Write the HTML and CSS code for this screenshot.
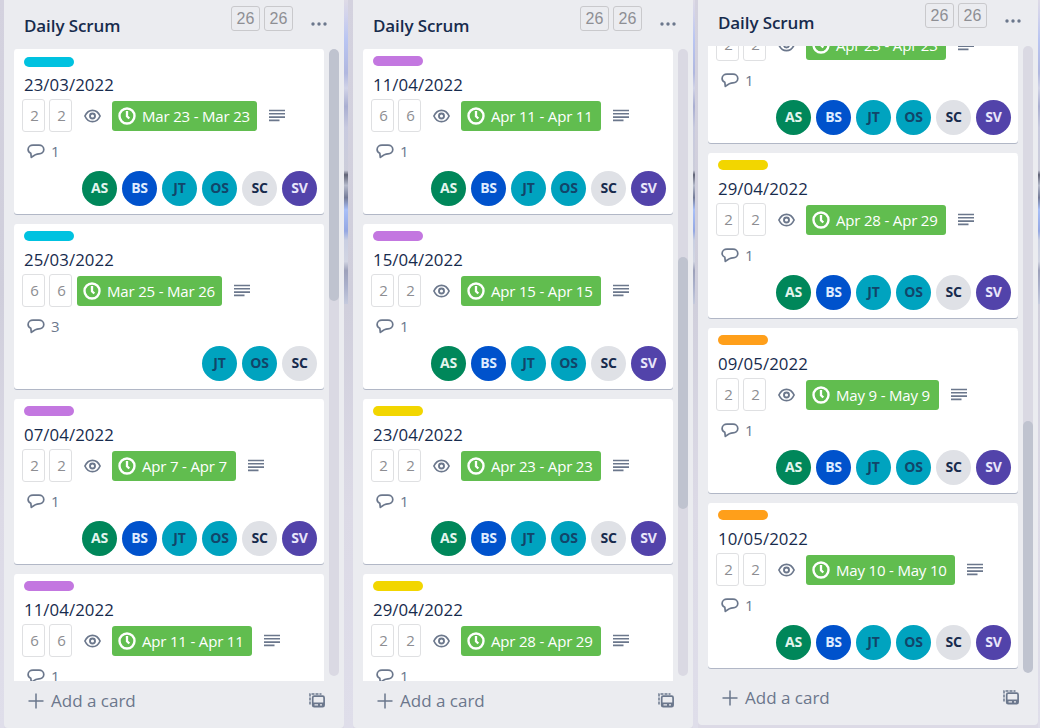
FILE: index.html
```
<!DOCTYPE html>
<html lang="en">
<head>
<meta charset="utf-8">
<title>Daily Scrum</title>
<link rel="stylesheet" href="styles.css">
</head>
<body>
<svg class="defs" aria-hidden="true">
  <symbol id="eye" viewBox="0 0 17 14"><path d="M.9 7C2.600 3.300 5.300 1.300 8.500 1.300S14.400 3.300 16.100 7C14.400 10.700 11.700 12.700 8.500 12.700S2.600 10.700.9 7Z" fill="none" stroke="currentColor" stroke-width="1.700"/><circle cx="8.500" cy="7" r="2.500" fill="none" stroke="currentColor" stroke-width="1.900"/></symbol>
  <symbol id="clock" viewBox="0 0 18 18"><circle cx="9" cy="9" r="7.500" fill="none" stroke="currentColor" stroke-width="2.400"/><path d="M9 4V9.200L11.300 11.500" fill="none" stroke="currentColor" stroke-width="2.300"/></symbol>
  <symbol id="lines" viewBox="0 0 16 13"><path d="M0 1.500H16M0 4.800H16M0 8.100H16M0 11.400H10.500" stroke="currentColor" stroke-width="1.600"/></symbol>
  <symbol id="talk" viewBox="0 0 18 15"><path d="M6 1.200H12A4.800 4.300 0 0 1 12 9.800Q8.500 9.800 4.300 13.400L3.800 9.200Q1.100 8 1.100 5.500A4.900 4.300 0 0 1 6 1.200Z" fill="none" stroke="currentColor" stroke-width="1.700" stroke-linejoin="round"/></symbol>
  <symbol id="plus" viewBox="0 0 16 16"><path d="M8 .5V15.500M.5 8H15.500" stroke="currentColor" stroke-width="1.500"/></symbol>
  <symbol id="template" viewBox="0 0 16 15"><path d="M1 11.500V1H12.500" fill="none" stroke="currentColor" stroke-width="1.500" stroke-dasharray="3 1"/><rect x="3.700" y="3.200" width="11.400" height="10.500" rx="1.500" fill="none" stroke="currentColor" stroke-width="1.700"/><path d="M4 9.500H15V13.500H4Z" fill="currentColor"/><path d="M5.500 11.800H9M11 11.800H13" stroke="#ebecf0" stroke-width="1.200"/></symbol>
  <symbol id="dots" viewBox="0 0 16 4"><g fill="currentColor"><circle cx="2" cy="2" r="1.700"/><circle cx="8" cy="2" r="1.700"/><circle cx="14" cy="2" r="1.700"/></g></symbol>
</svg>
<main class="board">
  <div class="gutter gutter-first"></div>

  <section class="list">
    <header class="list-header"><h2>Daily Scrum</h2><span class="count">26</span><span class="count">26</span><svg class="dots"><use href="#dots"/></svg></header>
    <div class="list-body">
      <div class="cards">
        <article class="card">
          <div class="label cyan lower"></div><h3>23/03/2022</h3>
          <div class="badges"><span class="points">2</span><span class="points second">2</span><svg class="eye"><use href="#eye"/></svg><span class="due mar"><svg class="clock"><use href="#clock"/></svg><span>Mar 23 - Mar 23</span></span><svg class="lines"><use href="#lines"/></svg></div>
          <div class="comments"><svg class="talk"><use href="#talk"/></svg><span>1</span></div>
          <div class="members"><span class="as">AS</span><span class="bs">BS</span><span class="jt">JT</span><span class="os">OS</span><span class="sc">SC</span><span class="sv">SV</span></div>
        </article>
        <article class="card">
          <div class="label cyan"></div><h3>25/03/2022</h3>
          <div class="badges"><span class="points">6</span><span class="points second">6</span><span class="due mar"><svg class="clock"><use href="#clock"/></svg><span>Mar 25 - Mar 26</span></span><svg class="lines"><use href="#lines"/></svg></div>
          <div class="comments"><svg class="talk"><use href="#talk"/></svg><span>3</span></div>
          <div class="members"><span class="jt">JT</span><span class="os">OS</span><span class="sc">SC</span></div>
        </article>
        <article class="card">
          <div class="label purple"></div><h3>07/04/2022</h3>
          <div class="badges"><span class="points">2</span><span class="points second">2</span><svg class="eye"><use href="#eye"/></svg><span class="due apr-short"><svg class="clock"><use href="#clock"/></svg><span>Apr 7 - Apr 7</span></span><svg class="lines"><use href="#lines"/></svg></div>
          <div class="comments"><svg class="talk"><use href="#talk"/></svg><span>1</span></div>
          <div class="members"><span class="as">AS</span><span class="bs">BS</span><span class="jt">JT</span><span class="os">OS</span><span class="sc">SC</span><span class="sv">SV</span></div>
        </article>
        <article class="card">
          <div class="label purple"></div><h3>11/04/2022</h3>
          <div class="badges"><span class="points">6</span><span class="points second">6</span><svg class="eye"><use href="#eye"/></svg><span class="due apr"><svg class="clock"><use href="#clock"/></svg><span>Apr 11 - Apr 11</span></span><svg class="lines"><use href="#lines"/></svg></div>
          <div class="comments"><svg class="talk"><use href="#talk"/></svg><span>1</span></div>
        </article>
      </div>
      <div class="track"><div class="thumb thumb-top"></div></div>
    </div>
    <footer class="list-footer"><svg class="plus"><use href="#plus"/></svg><span>Add a card</span><svg class="template"><use href="#template"/></svg></footer>
  </section>

  <div class="gutter gutter-wide"><i></i></div>

  <section class="list">
    <header class="list-header"><h2>Daily Scrum</h2><span class="count">26</span><span class="count">26</span><svg class="dots"><use href="#dots"/></svg></header>
    <div class="list-body">
      <div class="cards">
        <article class="card">
          <div class="label purple"></div><h3>11/04/2022</h3>
          <div class="badges"><span class="points">6</span><span class="points second">6</span><svg class="eye"><use href="#eye"/></svg><span class="due apr"><svg class="clock"><use href="#clock"/></svg><span>Apr 11 - Apr 11</span></span><svg class="lines"><use href="#lines"/></svg></div>
          <div class="comments"><svg class="talk"><use href="#talk"/></svg><span>1</span></div>
          <div class="members"><span class="as">AS</span><span class="bs">BS</span><span class="jt">JT</span><span class="os">OS</span><span class="sc">SC</span><span class="sv">SV</span></div>
        </article>
        <article class="card">
          <div class="label purple"></div><h3>15/04/2022</h3>
          <div class="badges"><span class="points">2</span><span class="points second">2</span><svg class="eye"><use href="#eye"/></svg><span class="due apr"><svg class="clock"><use href="#clock"/></svg><span>Apr 15 - Apr 15</span></span><svg class="lines"><use href="#lines"/></svg></div>
          <div class="comments"><svg class="talk"><use href="#talk"/></svg><span>1</span></div>
          <div class="members"><span class="as">AS</span><span class="bs">BS</span><span class="jt">JT</span><span class="os">OS</span><span class="sc">SC</span><span class="sv">SV</span></div>
        </article>
        <article class="card">
          <div class="label yellow"></div><h3>23/04/2022</h3>
          <div class="badges"><span class="points">2</span><span class="points second">2</span><svg class="eye"><use href="#eye"/></svg><span class="due apr"><svg class="clock"><use href="#clock"/></svg><span>Apr 23 - Apr 23</span></span><svg class="lines"><use href="#lines"/></svg></div>
          <div class="comments"><svg class="talk"><use href="#talk"/></svg><span>1</span></div>
          <div class="members"><span class="as">AS</span><span class="bs">BS</span><span class="jt">JT</span><span class="os">OS</span><span class="sc">SC</span><span class="sv">SV</span></div>
        </article>
        <article class="card">
          <div class="label yellow"></div><h3>29/04/2022</h3>
          <div class="badges"><span class="points">2</span><span class="points second">2</span><svg class="eye"><use href="#eye"/></svg><span class="due apr"><svg class="clock"><use href="#clock"/></svg><span>Apr 28 - Apr 29</span></span><svg class="lines"><use href="#lines"/></svg></div>
          <div class="comments"><svg class="talk"><use href="#talk"/></svg><span>1</span></div>
        </article>
      </div>
      <div class="track"><div class="thumb thumb-middle"></div></div>
    </div>
    <footer class="list-footer"><svg class="plus"><use href="#plus"/></svg><span>Add a card</span><svg class="template"><use href="#template"/></svg></footer>
  </section>

  <div class="gutter gutter-narrow"><i></i></div>

  <section class="list list-raised">
    <header class="list-header"><h2>Daily Scrum</h2><span class="count">26</span><span class="count">26</span><svg class="dots"><use href="#dots"/></svg></header>
    <div class="list-body">
      <div class="cards scrolled">
        <article class="card continued">
          <div class="badges"><span class="points">2</span><span class="points second">2</span><svg class="eye"><use href="#eye"/></svg><span class="due apr"><svg class="clock"><use href="#clock"/></svg><span>Apr 23 - Apr 23</span></span><svg class="lines"><use href="#lines"/></svg></div>
          <div class="comments"><svg class="talk"><use href="#talk"/></svg><span>1</span></div>
          <div class="members"><span class="as">AS</span><span class="bs">BS</span><span class="jt">JT</span><span class="os">OS</span><span class="sc">SC</span><span class="sv">SV</span></div>
        </article>
        <article class="card">
          <div class="label yellow"></div><h3>29/04/2022</h3>
          <div class="badges"><span class="points">2</span><span class="points second">2</span><svg class="eye"><use href="#eye"/></svg><span class="due apr"><svg class="clock"><use href="#clock"/></svg><span>Apr 28 - Apr 29</span></span><svg class="lines"><use href="#lines"/></svg></div>
          <div class="comments"><svg class="talk"><use href="#talk"/></svg><span>1</span></div>
          <div class="members"><span class="as">AS</span><span class="bs">BS</span><span class="jt">JT</span><span class="os">OS</span><span class="sc">SC</span><span class="sv">SV</span></div>
        </article>
        <article class="card">
          <div class="label orange"></div><h3>09/05/2022</h3>
          <div class="badges"><span class="points">2</span><span class="points second">2</span><svg class="eye"><use href="#eye"/></svg><span class="due may-short"><svg class="clock"><use href="#clock"/></svg><span>May 9 - May 9</span></span><svg class="lines"><use href="#lines"/></svg></div>
          <div class="comments"><svg class="talk"><use href="#talk"/></svg><span>1</span></div>
          <div class="members"><span class="as">AS</span><span class="bs">BS</span><span class="jt">JT</span><span class="os">OS</span><span class="sc">SC</span><span class="sv">SV</span></div>
        </article>
        <article class="card">
          <div class="label orange"></div><h3>10/05/2022</h3>
          <div class="badges"><span class="points">2</span><span class="points second">2</span><svg class="eye"><use href="#eye"/></svg><span class="due may"><svg class="clock"><use href="#clock"/></svg><span>May 10 - May 10</span></span><svg class="lines"><use href="#lines"/></svg></div>
          <div class="comments"><svg class="talk"><use href="#talk"/></svg><span>1</span></div>
          <div class="members"><span class="as">AS</span><span class="bs">BS</span><span class="jt">JT</span><span class="os">OS</span><span class="sc">SC</span><span class="sv">SV</span></div>
        </article>
      </div>
      <div class="track"><div class="thumb thumb-bottom"></div></div>
    </div>
    <footer class="list-footer"><svg class="plus"><use href="#plus"/></svg><span>Add a card</span><svg class="template"><use href="#template"/></svg></footer>
  </section>

  <div class="gutter gutter-last"><i></i></div>
</main>
</body>
</html>
```
FILE: styles.css
```
* { box-sizing: border-box; }
body { margin: 0; width: 1040px; height: 728px; overflow: hidden; background: #dcdae6; font-family: "Open Sans", "Noto Sans", sans-serif; color: #172b4d; }
svg { display: block; flex: none; }
.defs { display: none; }
.board { display: flex; align-items: flex-start; height: 728px; }

.gutter { height: 728px; flex: none; background: linear-gradient(#d4d2df, #cfcedb 40%, #dcdae6 70%, #dfdeea); }
.gutter i { display: block; height: 304px; background: linear-gradient(#dedbe6 0, #d2d3ec 5%, #b9c5f2 13%, #b0b7df 24%, #d1d3e7 29%, #a9aed1 35%, #c8cadf 42%, #cccdda 56%, #5f6275 57.500%, #b6bbcc 61%, #747b98 65%, #a8bff8 69%, #94a7e2 76%, #c9cfe2 79%, #d2d5e2 86%, #9da1ba 89%, #aab0cb 94%, #c5cadd 100%); }
.gutter-first { width: 4px; }
.gutter-wide { width: 9px; }
.gutter-wide i { width: 4px; }
.gutter-narrow { width: 5px; }
.gutter-narrow i { width: 2px; }
.gutter-last { width: 2px; }
.gutter-last i { width: 2px; }

.list { width: 340px; height: 728px; flex: none; background: #ebecf0; border-radius: 0 0 4px 4px; }
.list-raised { height: 725px; }
.list-header { display: flex; align-items: flex-start; height: 49px; padding: 6px 17px 0 20px; }
.list-raised .list-header { height: 46px; padding-top: 3px; }
.list-header h2 { width: 207px; margin: 7px 0 0; font-size: 17px; line-height: 25px; font-weight: 550; letter-spacing: -.1px; white-space: nowrap; }
.count { width: 29px; height: 25px; margin-right: 4px; border: 1px solid #c9c9cc; border-radius: 3px; color: #8e8f94; font: 16px/23px "Liberation Sans", sans-serif; text-align: center; }
.dots { width: 16px; height: 4px; margin: 16px 0 0 14px; color: #6b778c; }
.list-body { display: flex; gap: 5px; height: 632px; padding-left: 10px; overflow: hidden; }
.cards { width: 310px; height: 632px; overflow: hidden; }
.track { width: 10px; height: 627px; border-radius: 5px; background: #dad9e3; overflow: hidden; }
.thumb { height: 252px; border-radius: 5px; background: #bfc3cf; }
.thumb-middle { margin-top: 208px; }
.thumb-bottom { margin-top: 375px; }

.card { display: flow-root; height: 165px; margin-bottom: 10px; padding: 7px 7px 0 8px; background: #fff; border-radius: 3px; box-shadow: 0 1px 0 #b1b7c6; }
.card.continued { height: 97px; padding-top: 0; border-radius: 0 0 3px 3px; }
.continued .badges { margin-top: -19px; }
.label { width: 50px; height: 10px; margin-left: 2px; border-radius: 5px; }
.lower { position: relative; top: 1px; }
.cyan { background: #00c2e0; }
.purple { background: #c377e0; }
.yellow { background: #f2d600; }
.orange { background: #ff9f1a; }
.card h3 { margin: 6px 0 0 2px; font-size: 16.800px; line-height: 25px; height: 26px; font-weight: 370; letter-spacing: .08px; }
.badges { display: flex; align-items: center; height: 35px; color: #6b778c; }
.points { flex: none; width: 23px; height: 33px; margin-right: 4px; padding-left: 2px; border: 1px solid #dfe0e2; border-radius: 3px; color: #8d8e92; font-size: 15px; line-height: 31px; text-align: center; }
.second { margin-right: 5px; }
.eye { width: 17px; height: 14px; margin: 0 11px 0 7px; }
.due { display: flex; flex: none; align-items: center; height: 30px; border-radius: 3px; background: #61bd4f; color: #fff; font-size: 15px; letter-spacing: -.18px; white-space: nowrap; }
.mar { width: 145px; }
.apr { width: 140px; }
.apr-short { width: 124px; }
.may-short { width: 133px; }
.may { width: 149px; }
.clock { width: 18px; height: 18px; margin: 0 6px; }
.lines { width: 16px; height: 13px; margin-left: 12px; }
.comments { display: flex; height: 36px; align-items: center; padding-left: 5px; gap: 6px; font-size: 15px; color: #6b778c; }
.talk { width: 18px; height: 15px; }
.members { display: flex; justify-content: flex-end; gap: 5px; margin-top: 2px; }
.members span { width: 35px; height: 35px; border-radius: 50%; font-size: 14px; line-height: 34px; font-weight: 700; letter-spacing: -.2px; text-align: center; }
.as { background: #00875a; color: #e3f5ed; }
.bs { background: #0052cc; color: #deebff; }
.members .jt, .members .os { background: #00a3bf; color: #124569; }
.sc { background: #dfe1e6; color: #172b4d; }
.sv { background: #5243aa; color: #e9e6fa; }

.list-footer { display: flex; align-items: center; height: 39px; padding: 0 19px 0 24px; color: #6b778c; font-size: 17px; }
.plus { width: 16px; height: 16px; margin-right: 7px; }
.template { width: 16px; height: 15px; margin-left: auto; }
```
